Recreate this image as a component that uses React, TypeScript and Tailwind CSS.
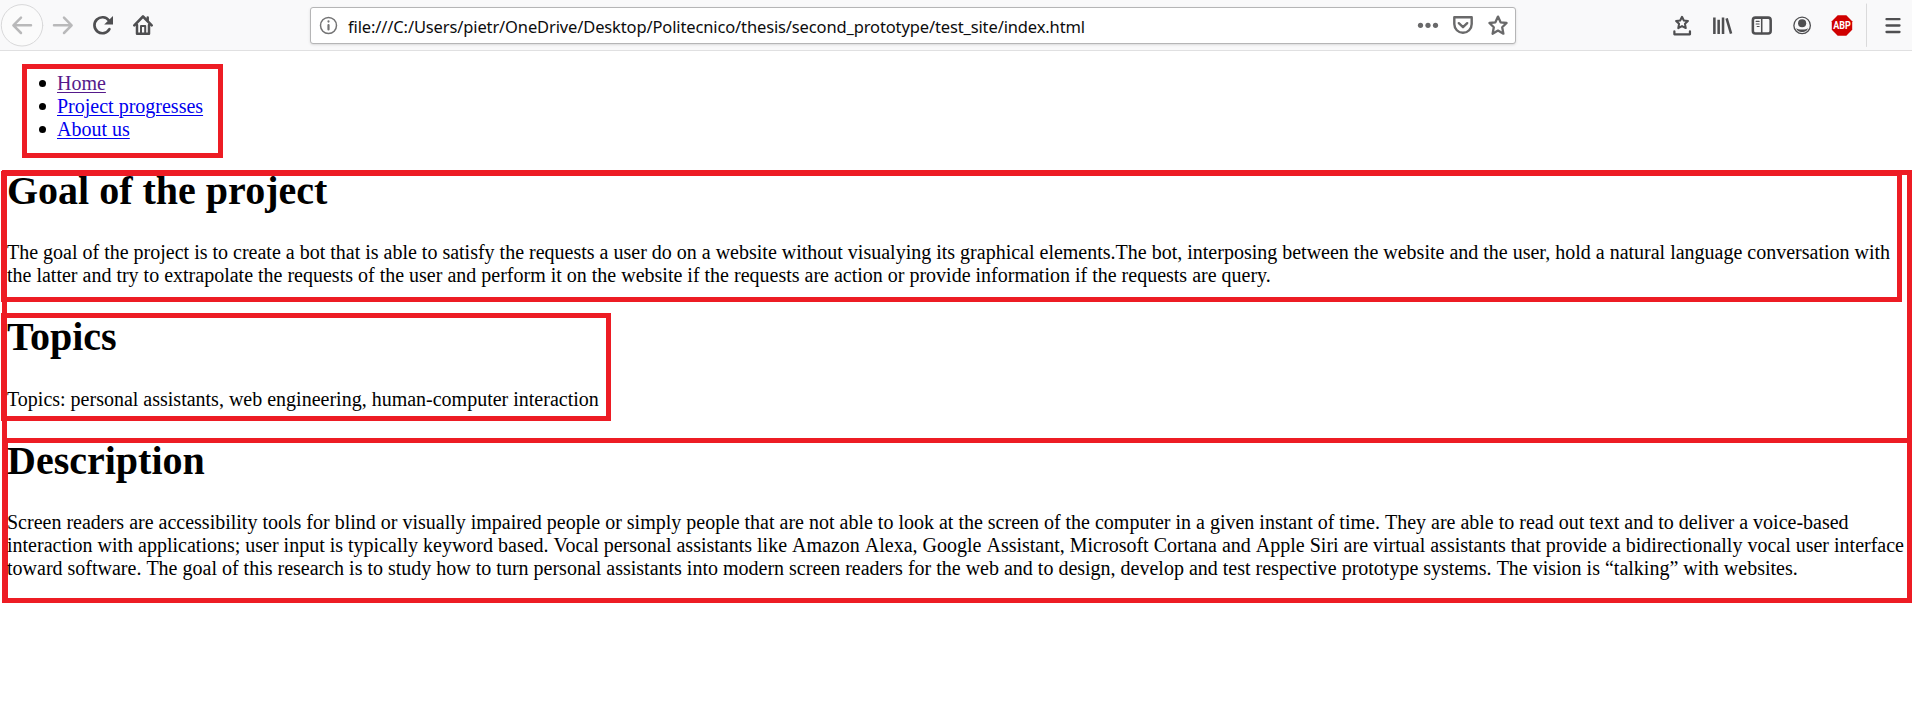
import React from "react";

const stroke = { fill: "none", strokeLinecap: "round", strokeLinejoin: "round" } as const;

function Toolbar() {
  return (
    <header className="flex h-[51px] w-full shrink-0 items-center border-b border-[#e0e0e1] bg-[#f9f9fa] text-[#4f4f51]">
      <div className="flex h-[50px] w-[310px] shrink-0 items-center">
        <svg width="160" height="50" viewBox="0 0 160 50" {...stroke} stroke="#b9b9ba" strokeWidth="2.5">
          <circle cx="22" cy="25.3" r="20.7" fill="#fbfbfb" stroke="#d9d9da" strokeWidth="1" />
          <path d="M31 25.3H13.500M21 17.700l-7.600 7.600L21 33" />
          <path d="M54 25.300h17.500M64 17.700l7.600 7.600L64 33" />
          <g stroke="#4f4f51">
            <path d="M108.900 20.500A8 8 0 1 0 109.400 29.200" strokeWidth="2.700" />
            <path d="M113 16v8.600h-8.800z" fill="#4f4f51" stroke="none" />
            <path d="M134.300 25.300L143 16.500l8.700 8.800" strokeWidth="2.600" />
            <path d="M137 25v8.700h12V25M147.700 17.500v3" strokeWidth="2.500" />
            <path d="M141 34v-8h4.200v8" strokeWidth="2" />
          </g>
        </svg>
      </div>
      <div className="flex h-[37px] w-[1206px] shrink-0 items-center rounded-[3px] border border-[#b5b5b6] bg-white shadow-sm">
        <svg className="ml-2 shrink-0" width="19" height="19" viewBox="0 0 19 19" {...stroke} stroke="#737374">
          <circle cx="9.500" cy="9.500" r="8" strokeWidth="1.500" />
          <path d="M9.500 9v4.500M9.500 5.400v.2" strokeWidth="2.200" />
        </svg>
        <span className="ml-[10px] flex-1 whitespace-nowrap pt-[3px] font-['Noto_Sans',sans-serif] text-[16.5px] leading-6 tracking-[-0.13px] text-[#0c0c0d]">
          file:///C:/Users/pietr/OneDrive/Desktop/Politecnico/thesis/second_prototype/test_site/index.html
        </span>
        <svg className="shrink-0" width="104" height="35" viewBox="1411 8 104 35" {...stroke} stroke="#69696a">
          <g fill="#69696a" stroke="none">
            <circle cx="1420.500" cy="25.300" r="2.600" />
            <circle cx="1428" cy="25.300" r="2.600" />
            <circle cx="1435.500" cy="25.300" r="2.600" />
          </g>
          <path d="M1454.300 17.300h17.400v6.800a8.700 8.700 0 0 1-17.400 0z" strokeWidth="2.400" />
          <path d="M1458.800 23.200l4.200 4 4.200-4" strokeWidth="2.400" />
          <path d="M1498 16.600l2.600 5.700 6 .7-4.400 4.300 1.200 6.400-5.400-3.100-5.400 3.100 1.200-6.400-4.400-4.300 6-.7z" strokeWidth="2.300" />
        </svg>
      </div>
      <svg className="ml-auto shrink-0" width="252" height="50" viewBox="1660 0 252 50" {...stroke} stroke="#4f4f51">
        <g transform="translate(-24.7 0) scale(1.0179)">
          <path d="M1676.700 16.500l1.800 3.600 4 .5-2.900 2.800.8 4.200-3.700-2-3.700 2 .8-4.200-2.900-2.800 4-.5z" strokeWidth="2" />
          <path d="M1669.200 30.800v2.900h15.300v-2.900" strokeWidth="2.200" />
          <path d="M1708.500 17.200v16.200M1712.700 19.500v13.900M1717 17.200v16.200M1720.500 18l4.400 15" strokeWidth="2.500" strokeLinecap="butt" />
          <rect x="1746.300" y="17.300" width="17.500" height="15.700" rx="2.500" strokeWidth="2.500" />
          <path d="M1755 17.500V33" strokeWidth="1.500" />
          <path d="M1749.500 21h3M1749.500 23.500h3M1750.500 26h2" strokeWidth="1" />
          <circle cx="1794.700" cy="25" r="8.100" strokeWidth="1.300" />
          <circle cx="1794.700" cy="22.800" r="4" fill="#4f4f51" stroke="none" />
          <path d="M1789 27.500c1 2 10.400 2 11.400 0-.5 5.300-10.900 5.300-11.400 0z" fill="#4f4f51" stroke="none" />
        </g>
        <path d="M1837.700 15.200h8.600l5.900 6v8.600l-5.900 6h-8.600l-5.900-6v-8.600z" fill="#d00000" stroke="none" />
        <text x="1842" y="29.300" textAnchor="middle" fontFamily="Roboto, sans-serif" fontSize="10.500" fontWeight="700" fill="#fff" stroke="none" textLength="17.500" lengthAdjust="spacingAndGlyphs">ABP</text>
        <path d="M1866.500 4v42.500" stroke="#dadadb" strokeWidth="1" />
        <path d="M1886.500 19.200h13M1886.500 25.500h13M1886.500 32h13" strokeWidth="2.300" />
      </svg>
    </header>
  );
}

const links = [
  { label: "Home", tone: "text-[#551a8b]" },
  { label: "Project progresses", tone: "text-[#0000ee]" },
  { label: "About us", tone: "text-[#0000ee]" },
];

function Heading({ children }: { children: React.ReactNode }) {
  return <h1 className="text-[40px] font-bold leading-[30px]">{children}</h1>;
}

/* Sets each line unwrapped, with no kerning between a space and a capital. */
function Prose({ lines }: { lines: string[] }) {
  return (
    <>
      {lines.map((line) => (
        <span key={line} className="block">
          {line.split(/ (?=[ATVWY])/).map((part, i) => (
            <React.Fragment key={i}>
              {i > 0 && <span className="[font-kerning:none]"> </span>}
              {part}
            </React.Fragment>
          ))}
        </span>
      ))}
    </>
  );
}

export default function App() {
  return (
    <div className="flex h-[706px] w-[1912px] flex-col overflow-hidden bg-white font-['Liberation_Serif',serif] text-[20px] leading-[23px] text-black">
      <Toolbar />
      <nav className="ml-[22px] mt-[13px] h-[94px] w-[201px] shrink-0 border-[5px] border-[#ed1c24] pt-[3px]">
        <ul className="pl-3">
          {links.map((l) => (
            <li key={l.label} className="flex items-center whitespace-nowrap">
              <span className="mr-[11px] size-[7px] rounded-full bg-black" />
              <a href="#" className={`underline decoration-1 underline-offset-2 ${l.tone}`}>{l.label}</a>
            </li>
          ))}
        </ul>
      </nav>
      <main className="ml-[2px] mt-[12px] h-[433px] w-[1910px] shrink-0 whitespace-nowrap border-[5px] border-[#ed1c24]">
        <section className="-ml-[6px] -mt-[4px] h-[131px] w-[1901px] border-[5px] border-[#ed1c24] pl-px">
          <Heading>Goal of the project</Heading>
          <div className="mt-[35px]">
            <Prose
              lines={[
                "The goal of the project is to create a bot that is able to satisfy the requests a user do on a website without visualying its graphical elements.The bot, interposing between the website and the user, hold a natural language conversation with",
                "the latter and try to extrapolate the requests of the user and perform it on the website if the requests are action or provide information if the requests are query.",
              ]}
            />
          </div>
        </section>
        <section className="-ml-[6px] mt-[11px] h-[108px] w-[610px] border-[5px] border-[#ed1c24] pl-px pt-[4px]">
          <Heading>Topics</Heading>
          <div className="mt-[36px]">
            <Prose lines={["Topics: personal assistants, web engineering, human-computer interaction"]} />
          </div>
        </section>
        <section className="-ml-[4px] mt-[17px] h-[165px] w-[1909px] border-[5px] border-[#ed1c24] pt-[3px]">
          <div className="-ml-px">
            <Heading>Description</Heading>
            <div className="mt-[35px]">
              <Prose
                lines={[
                  "Screen readers are accessibility tools for blind or visually impaired people or simply people that are not able to look at the screen of the computer in a given instant of time. They are able to read out text and to deliver a voice-based",
                  "interaction with applications; user input is typically keyword based. Vocal personal assistants like Amazon Alexa, Google Assistant, Microsoft Cortana and Apple Siri are virtual assistants that provide a bidirectionally vocal user interface",
                  "toward software. The goal of this research is to study how to turn personal assistants into modern screen readers for the web and to design, develop and test respective prototype systems. The vision is “talking” with websites.",
                ]}
              />
            </div>
          </div>
        </section>
      </main>
    </div>
  );
}
